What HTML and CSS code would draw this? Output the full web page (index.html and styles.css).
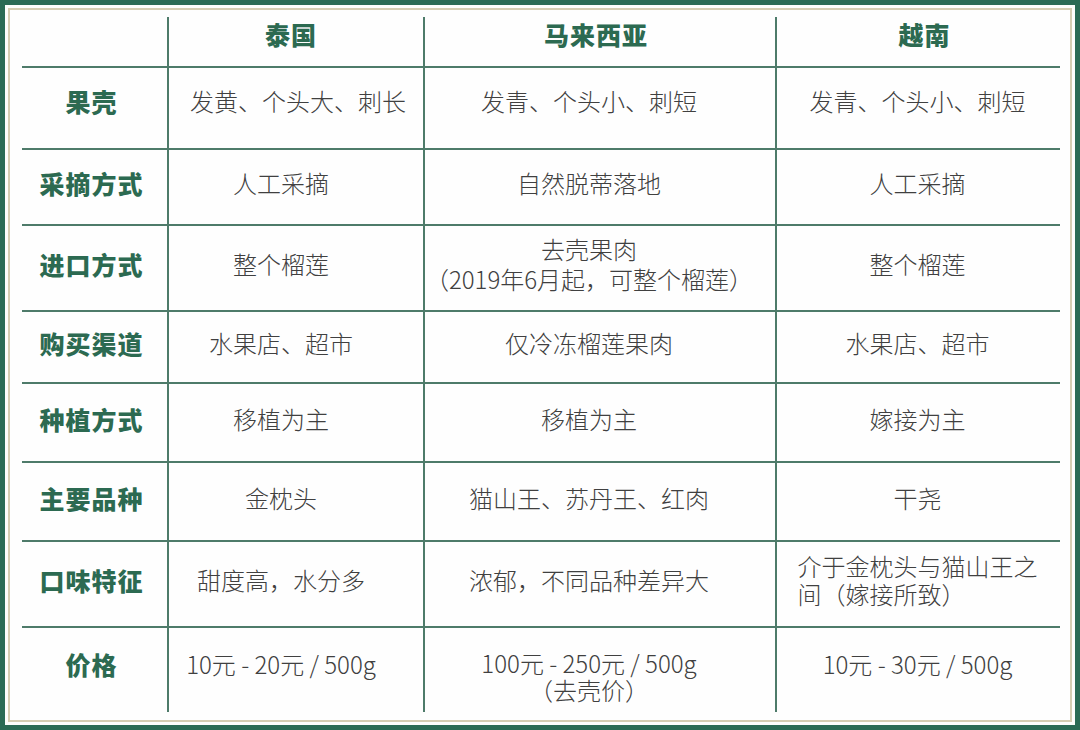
FILE: index.html
```html
<!DOCTYPE html>
<html lang="zh-CN">
<head>
<meta charset="utf-8">
<link rel="stylesheet" href="styles.css">
</head>
<body>
<div class="frame">
  <div class="inner">
    <div class="table">
      <div class="cell head c1"></div>
      <div class="cell head c2">泰国</div>
      <div class="cell head c3">马来西亚</div>
      <div class="cell head c4">越南</div>

      <div class="cell label r first">果壳</div>
      <div class="cell c2 r first shift">发黄、个头大、刺长</div>
      <div class="cell c3 r first">发青、个头小、刺短</div>
      <div class="cell c4 r first">发青、个头小、刺短</div>

      <div class="cell label r">采摘方式</div>
      <div class="cell c2 r">人工采摘</div>
      <div class="cell c3 r">自然脱蒂落地</div>
      <div class="cell c4 r">人工采摘</div>

      <div class="cell label r">进口方式</div>
      <div class="cell c2 r">整个榴莲</div>
      <div class="cell c3 r"><span class="lines">去壳果肉<br>（2019年6月起，可整个榴莲）</span></div>
      <div class="cell c4 r">整个榴莲</div>

      <div class="cell label r">购买渠道</div>
      <div class="cell c2 r">水果店、超市</div>
      <div class="cell c3 r">仅冷冻榴莲果肉</div>
      <div class="cell c4 r">水果店、超市</div>

      <div class="cell label r">种植方式</div>
      <div class="cell c2 r">移植为主</div>
      <div class="cell c3 r">移植为主</div>
      <div class="cell c4 r">嫁接为主</div>

      <div class="cell label r">主要品种</div>
      <div class="cell c2 r">金枕头</div>
      <div class="cell c3 r">猫山王、苏丹王、红肉</div>
      <div class="cell c4 r">干尧</div>

      <div class="cell label r">口味特征</div>
      <div class="cell c2 r">甜度高，水分多</div>
      <div class="cell c3 r">浓郁，不同品种差异大</div>
      <div class="cell c4 r"><span class="lines left">介于金枕头与猫山王之<br>间（嫁接所致）</span></div>

      <div class="cell label r last">价格</div>
      <div class="cell c2 r last">10元 - 20元 / 500g</div>
      <div class="cell c3 r last"><span class="lines">100元 - 250元 / 500g<br>（去壳价）</span></div>
      <div class="cell c4 r last">10元 - 30元 / 500g</div>
    </div>
  </div>
</div>
</body>
</html>
```

FILE: styles.css
```css
* { box-sizing: border-box; }
html, body {
  margin: 0;
  padding: 0;
  background: #ffffff;
}
body {
  width: 1080px;
  height: 730px;
  overflow: hidden;
  font-family: "Noto Sans CJK SC", "Noto Sans", sans-serif;
}
.frame {
  width: 1080px;
  height: 730px;
  border: 5px solid #2b6b55;
  padding: 3px;
  background: #fdfdfc;
}
.inner {
  width: 100%;
  height: 100%;
  border: 2px solid #d5cdb2;
  padding: 7px 10px 5px 12px;
  background: #fefefe;
}
.table {
  display: grid;
  grid-template-columns: 145px 256px 352px 285px;
  grid-template-rows: 49px 82px 76px 86px 72px 79px 79px 86px 86px;
}
.cell {
  display: flex;
  align-items: center;
  justify-content: center;
  font-size: 24px;
  line-height: 30px;
  color: #404040;
  font-weight: 300;
  border-color: #4e7b6a;
  border-style: solid;
  border-width: 0;
  white-space: nowrap;
  padding-bottom: 8px;
}
.c2, .c3, .c4 { border-left-width: 2px; }
.r { border-top-width: 2px; }
.c2 { padding-right: 30px; }
.c3 { padding-right: 22px; }
.c4 { padding-right: 2px; }
.c2.shift { padding-right: 0; padding-left: 4px; }
.first { padding-bottom: 14px; }
.head, .label {
  color: #2c6a51;
  font-weight: 900;
  font-size: 25px;
  letter-spacing: 1px;
}
.head { padding-bottom: 16px; }
.head.c2 { padding-right: 10px; }
.head.c3 { padding-right: 8px; }
.head.c4 { padding-right: 0; padding-left: 12px; }
.label { padding-right: 6px; }
.lines { text-align: center; line-height: 30px; }
.lines.left { text-align: left; line-height: 28px; }
.last { align-items: flex-start; padding-top: 21px; padding-bottom: 0; }
.last .lines { line-height: 27px; }
```
